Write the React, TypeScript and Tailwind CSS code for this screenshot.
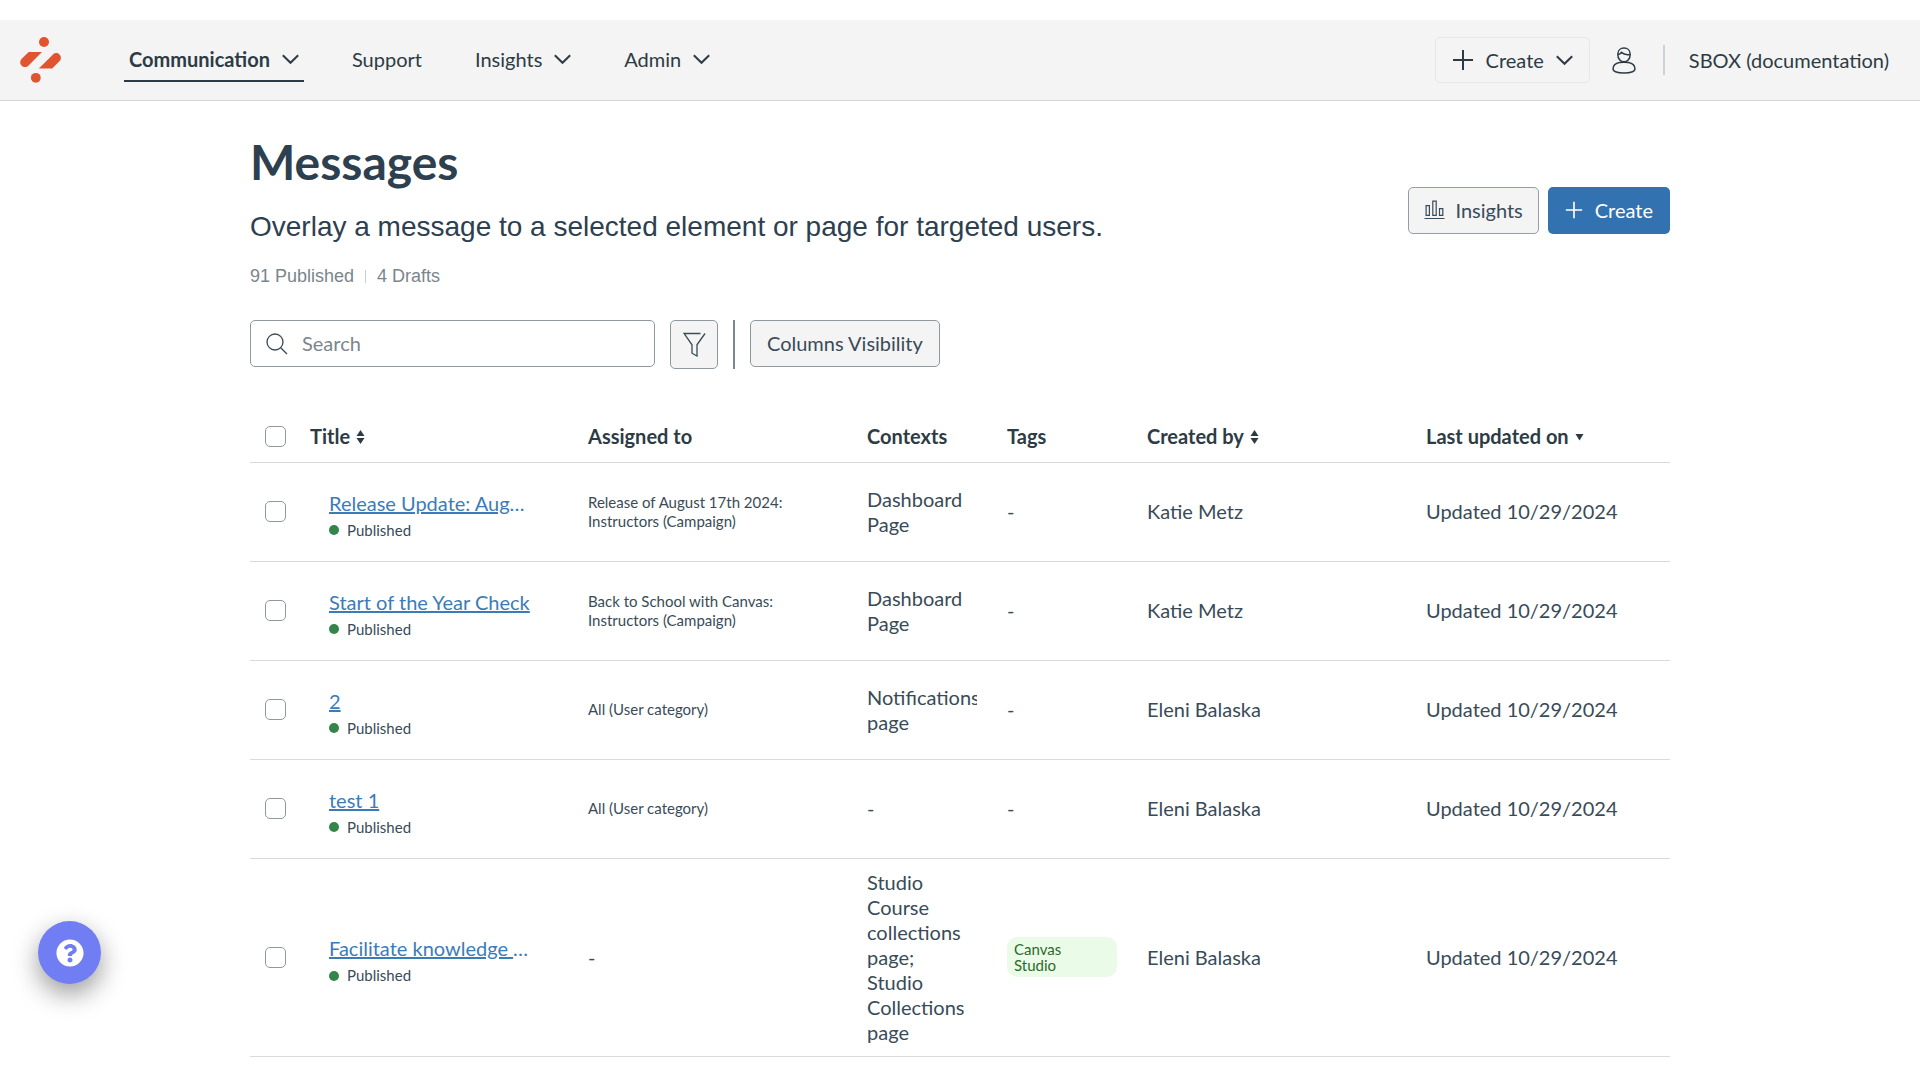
import type { ReactNode } from "react";
import { FaQuestionCircle } from "react-icons/fa";

type Sort = "both" | "desc";

type Message = {
  title: string;
  truncated?: boolean;
  assignedTo?: string[];
  contexts: string;
  tag?: string;
  createdBy: string;
  updated: string;
};

const NAV_ITEMS = [
  { label: "Communication", menu: true, active: true },
  { label: "Support", menu: false, active: false },
  { label: "Insights", menu: true, active: false },
  { label: "Admin", menu: true, active: false },
];

const MESSAGES: Message[] = [
  {
    title: "Release Update: Aug",
    truncated: true,
    assignedTo: ["Release of August 17th 2024:", "Instructors (Campaign)"],
    contexts: "Dashboard Page",
    createdBy: "Katie Metz",
    updated: "Updated 10/29/2024",
  },
  {
    title: "Start of the Year Check",
    assignedTo: ["Back to School with Canvas:", "Instructors (Campaign)"],
    contexts: "Dashboard Page",
    createdBy: "Katie Metz",
    updated: "Updated 10/29/2024",
  },
  { title: "2", assignedTo: ["All (User category)"], contexts: "Notifications page", createdBy: "Eleni Balaska", updated: "Updated 10/29/2024" },
  { title: "test 1", assignedTo: ["All (User category)"], contexts: "-", createdBy: "Eleni Balaska", updated: "Updated 10/29/2024" },
  {
    title: "Facilitate knowledge ",
    truncated: true,
    contexts: "Studio Course collections page;\nStudio Collections page",
    tag: "Canvas Studio",
    createdBy: "Eleni Balaska",
    updated: "Updated 10/29/2024",
  },
];

export default function App() {
  return (
    <div className="min-h-screen bg-white pt-5 font-['Lato',sans-serif] text-xl leading-[25px] text-[#394b58]">
      <TopBar />
      <main className="mx-auto max-w-[1420px] pt-[31px]">
        <PageHeading />
        <Toolbar />
        <MessagesTable />
      </main>
      <button
        type="button"
        aria-label="Help"
        className="fixed bottom-24 left-[38px] flex size-[63px] items-center justify-center rounded-full bg-[#717df2] text-white shadow-[0_10px_26px_rgba(0,0,0,0.4)]"
      >
        <FaQuestionCircle className="size-7" />
      </button>
    </div>
  );
}

function TopBar() {
  return (
    <header className="flex h-[81px] items-center border-b border-[#d0d5d9] bg-[#f4f4f4] pr-[31px] pl-5 text-[#2d3b45]">
      <a href="#home" aria-label="Home" className="mr-[63px]">
        <Logo />
      </a>
      <nav className="flex items-center gap-[43px]">
        {NAV_ITEMS.map((item) => (
          <a
            key={item.label}
            href={`#${item.label.toLowerCase()}`}
            className={
              item.active
                ? "flex h-11 items-center gap-3 border-b-2 border-[#2d3b45] px-[5px] font-bold"
                : "flex h-11 items-center gap-3 border-b-2 border-transparent px-[5px]"
            }
          >
            {item.label}
            {item.menu && <Chevron />}
          </a>
        ))}
      </nav>
      <div className="ml-auto flex items-center">
        <button type="button" className="flex h-[46px] items-center gap-3 rounded-[5px] border border-[#e6e7e8] px-4">
          <Plus className="size-[22px]" />
          Create
          <Chevron />
        </button>
        <button type="button" aria-label="Account" className="mr-[27px] ml-[22px]">
          <UserIcon />
        </button>
        <div className="h-[30px] w-0.5 bg-[#ced3d8]" />
        <span className="ml-6">SBOX (documentation)</span>
      </div>
    </header>
  );
}

function PageHeading() {
  return (
    <div className="flex items-center justify-between">
      <div>
        <h1 className="text-5xl leading-[60px] font-bold text-[#2d4050]">Messages</h1>
        <p className="mt-[18px] font-['Liberation_Sans',sans-serif] text-[28px] leading-[34px] text-[#2d4050]">
          Overlay a message to a selected element or page for targeted users.
        </p>
        <div className="mt-5 flex items-center gap-[11px] font-['Liberation_Sans',sans-serif] text-lg leading-6 text-[#7b858d]">
          <span>91 Published</span>
          <span className="h-[13px] w-px bg-[#c7cdd1]" />
          <span>4 Drafts</span>
        </div>
      </div>
      <div className="flex gap-[9px]">
        <button type="button" className="flex h-[47px] items-center gap-[10px] rounded-[5px] border border-[#959ea6] bg-[#f4f4f4] px-[15px]">
          <BarsIcon />
          Insights
        </button>
        <button type="button" className="flex h-[47px] items-center gap-3 rounded-[5px] bg-[#3272b1] px-[17px] text-white">
          <Plus className="size-[18px]" />
          Create
        </button>
      </div>
    </div>
  );
}

function Toolbar() {
  return (
    <div className="mt-8 flex items-start">
      <label className="flex h-[47px] w-[405px] items-center gap-[14px] rounded-[5px] border border-[#8d98a1] px-[15px]">
        <SearchIcon />
        <input type="search" aria-label="Search" placeholder="Search" className="w-full bg-transparent outline-none placeholder:text-[#7b858d]" />
      </label>
      <button type="button" aria-label="Filter" className="ml-[15px] flex h-[49px] w-12 items-center justify-center rounded-[5px] border border-[#8d98a1] bg-[#f4f4f4]">
        <FilterIcon />
      </button>
      <div className="mx-[15px] h-[49px] w-0.5 bg-[#7d8891]" />
      <button type="button" className="h-[47px] rounded-[5px] border border-[#8d98a1] bg-[#f4f4f4] px-4">
        Columns Visibility
      </button>
    </div>
  );
}

function MessagesTable() {
  return (
    <table className="mt-[43px] w-full table-fixed text-left">
      <colgroup>
        <col className="w-[45px]" />
        <col className="w-[278px]" />
        <col className="w-[279px]" />
        <col className="w-[140px]" />
        <col className="w-[140px]" />
        <col className="w-[279px]" />
        <col />
      </colgroup>
      <thead>
        <tr className="h-[50px] border-b border-[#d7dade] text-[#2d3b45]">
          <th className="pl-[15px]">
            <Checkbox label="Select all messages" />
          </th>
          <HeaderCell sort="both">Title</HeaderCell>
          <HeaderCell>Assigned to</HeaderCell>
          <HeaderCell>Contexts</HeaderCell>
          <HeaderCell>Tags</HeaderCell>
          <HeaderCell sort="both">Created by</HeaderCell>
          <HeaderCell sort="desc">Last updated on</HeaderCell>
        </tr>
      </thead>
      <tbody>
        {MESSAGES.map((message) => (
          <MessageRow key={message.title} message={message} />
        ))}
      </tbody>
    </table>
  );
}

function HeaderCell({ sort, children }: { sort?: Sort; children: ReactNode }) {
  return (
    <th className="px-[15px] font-bold">
      {sort ? (
        <button type="button" className="flex items-center gap-[6px]">
          {children}
          <SortIcon sort={sort} />
        </button>
      ) : (
        children
      )}
    </th>
  );
}

function MessageRow({ message }: { message: Message }) {
  return (
    <tr className="h-[99px] border-b border-[#d7dade]">
      <td className="pl-[15px]">
        <Checkbox label={`Select ${message.title.trim()}`} />
      </td>
      <td className="pt-[10px] pl-[34px] whitespace-nowrap">
        <div className="whitespace-pre text-[#3b7cb8]">
          <a href="#message" className="underline">{message.title}</a>
          {message.truncated && "…"}
        </div>
        <div className="mt-0.5 flex items-center gap-2 text-[15px]">
          <span className="size-2.5 rounded-full bg-[#34854a]" />
          Published
        </div>
      </td>
      <td className="px-[15px]">
        {message.assignedTo ? (
          <div className="text-[15px] leading-[19px]">
            {message.assignedTo.map((line) => (
              <div key={line}>{line}</div>
            ))}
          </div>
        ) : (
          "-"
        )}
      </td>
      <td className="px-[15px] py-[11px]">
        <div className="overflow-hidden whitespace-pre-line">{message.contexts}</div>
      </td>
      <td className="px-[15px]">
        {message.tag ? (
          <div className="rounded-[10px] bg-[#eafce8] px-[7px] py-1 text-[15px] leading-4 text-[#2c6a28]">
            <div className="w-14">{message.tag}</div>
          </div>
        ) : (
          "-"
        )}
      </td>
      <td className="px-[15px]">{message.createdBy}</td>
      <td className="px-[15px]">{message.updated}</td>
    </tr>
  );
}

function Checkbox({ label }: { label: string }) {
  return (
    <input
      type="checkbox"
      aria-label={label}
      className="block size-[21px] appearance-none rounded-[5px] border border-[#8d98a1] bg-white checked:bg-[#3272b1]"
    />
  );
}

function SortIcon({ sort }: { sort: Sort }) {
  return (
    <svg className="h-4 w-[9px]" viewBox="0 0 9 16" fill="currentColor" aria-hidden="true">
      {sort === "both" && <path d="M4.5 1 8.5 7h-8z" />}
      <path d={sort === "both" ? "M4.5 15 8.5 9h-8z" : "M4.5 11.5 8.5 5h-8z"} />
    </svg>
  );
}

function Chevron() {
  return (
    <svg className="h-[11px] w-[17px]" viewBox="0 0 17 11" fill="none" stroke="currentColor" strokeWidth="2" aria-hidden="true">
      <path d="M.8 1.2 8.5 8.8l7.7-7.6" />
    </svg>
  );
}

function Plus({ className }: { className: string }) {
  return (
    <svg className={className} viewBox="0 0 22 22" fill="none" stroke="currentColor" strokeWidth="2" aria-hidden="true">
      <path d="M11 1v20M1 11h20" />
    </svg>
  );
}

function Logo() {
  return (
    <svg className="h-[46px] w-[41px]" viewBox="0 0 41 46" fill="#e0542f" aria-hidden="true">
      <circle cx="24" cy="5" r="5" />
      <circle cx="15.8" cy="40.8" r="4.9" />
      <path d="M8.7 15H22L8.6 28.4C6.7 30.4 3.6 30.6 1.7 28.7-.3 26.7-.3 24 1.7 21.8Z" />
      <path d="M18.8 31.5 33 17.5c2-1.9 4.6-1.9 6.4 0 2 1.9 2 4.8 0 6.8l-7.2 7.2Z" />
    </svg>
  );
}

function UserIcon() {
  return (
    <svg className="block h-[27px] w-6" viewBox="0 0 24 27" fill="none" stroke="currentColor" strokeWidth="1.5" aria-hidden="true">
      <path d="M5.8 7.2C5.8 3.6 8.4 1 12 1s6.2 2.6 6.2 6.2c0 4.5-2.7 7.6-6.2 7.6S5.8 11.7 5.8 7.2Z" />
      <path d="M5.8 7.6c1.700-.1 2.900-.8 3.600-2.200 2.300 2.100 5.200 2.600 8.700 2" />
      <path d="M7.5 15.5C3.5 16.300 1 18.500 1 22c0 2.500 5 4 11 4s11-1.500 11-4c0-3.500-2.500-5.700-6.500-6.500-1.300-.2-2.800-.3-4.500-.3s-3.200.1-4.500.3Z" />
    </svg>
  );
}

function BarsIcon() {
  return (
    <svg className="h-5 w-[21px]" viewBox="0 0 21 20" fill="none" stroke="currentColor" strokeWidth="1.2" aria-hidden="true">
      <path d="M2.1 5.6h3.3v9.8H2.1zM8.8 1.1h3.4v14.3H8.8zM15.5 8.6h3.3v6.8h-3.3zM.5 18.5h20" />
    </svg>
  );
}

function SearchIcon() {
  return (
    <svg className="size-[22px] shrink-0" viewBox="0 0 22 22" fill="none" stroke="currentColor" strokeWidth="1.3" aria-hidden="true">
      <circle cx="9" cy="9" r="8" />
      <path d="m14.7 14.7 6.3 6.3" />
    </svg>
  );
}

function FilterIcon() {
  return (
    <svg className="h-[25px] w-[23px]" viewBox="0 0 23 25" fill="none" stroke="currentColor" strokeWidth="1.3" aria-hidden="true">
      <path d="M17.5 1.5H1.2L9 12.8v8.4l5 2.8V12.800L22 1.500" />
    </svg>
  );
}
